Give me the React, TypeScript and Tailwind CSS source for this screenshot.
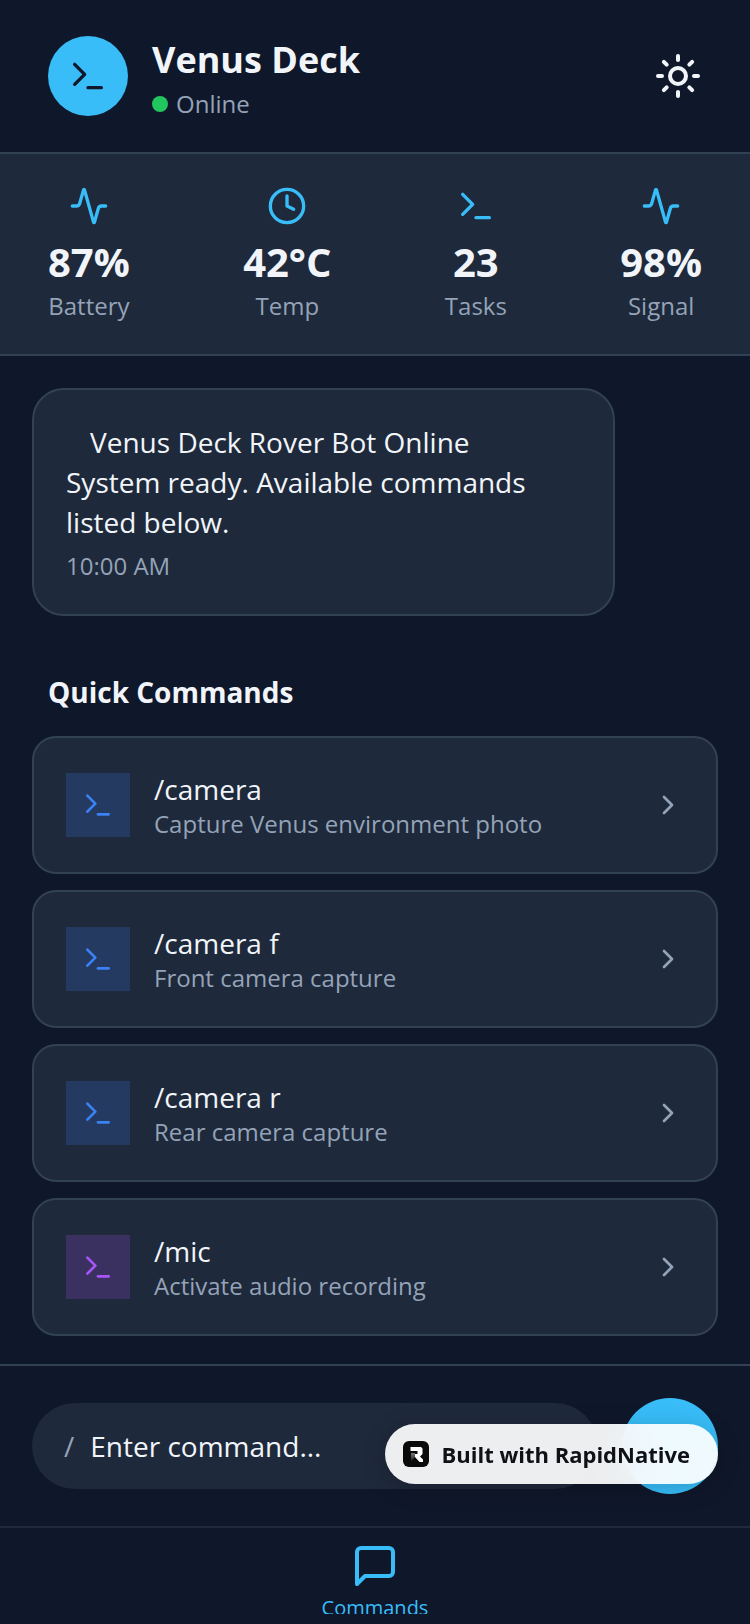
import React from 'react';
import { Activity, ChevronRight, Clock, Sun, Terminal } from 'lucide-react';
import { FiMessageSquare } from 'react-icons/fi';

const stats = [
  { label: 'Battery', value: '87%', Icon: Activity },
  { label: 'Temp', value: '42°C', Icon: Clock },
  { label: 'Tasks', value: '23', Icon: Terminal },
  { label: 'Signal', value: '98%', Icon: Activity },
];

const commands = [
  { name: '/camera', description: 'Capture Venus environment photo', tone: 'bg-[#3b82f6]/20 text-[#3b82f6]' },
  { name: '/camera f', description: 'Front camera capture', tone: 'bg-[#3b82f6]/20 text-[#3b82f6]' },
  { name: '/camera r', description: 'Rear camera capture', tone: 'bg-[#3b82f6]/20 text-[#3b82f6]' },
  { name: '/mic', description: 'Activate audio recording', tone: 'bg-[#a855f7]/20 text-[#a855f7]' },
];

const Header: React.FC = () => (
  <header className="flex items-center justify-between px-12 py-8 border-b-2 border-[#334155]">
    <div className="flex items-center gap-6">
      <div className="w-20 h-20 rounded-full bg-[#38bdf8] text-[#0f172a] flex items-center justify-center">
        <Terminal size={40} />
      </div>
      <div>
        <h1 className="text-4xl leading-14 font-bold">Venus Deck</h1>
        <div className="flex items-center gap-2">
          <span className="w-4 h-4 rounded-full bg-[#22c55e]"></span>
          <span className="text-2xl text-[#94a3b8]">Online</span>
        </div>
      </div>
    </div>
    <button type="button" aria-label="Toggle theme">
      <Sun size={48} />
    </button>
  </header>
);

const Stats: React.FC = () => (
  <section className="flex justify-between px-12 py-8 bg-[#1e293b] border-b-2 border-[#334155]">
    {stats.map(({ label, value, Icon }) => (
      <div key={label} className="flex flex-col items-center">
        <Icon size={40} className="text-[#38bdf8]" />
        <span className="mt-2 text-[40px] leading-14 font-bold">{value}</span>
        <span className="text-2xl text-[#94a3b8]">{label}</span>
      </div>
    ))}
  </section>
);

const Message: React.FC = () => (
  <div className="max-w-[85%] p-8 rounded-[32px] bg-[#1e293b] border-2 border-[#334155]">
    <p className="text-[28px] leading-10 indent-6">Venus Deck Rover Bot Online</p>
    <p className="text-[28px] leading-10">System ready. Available commands listed below.</p>
    <p className="mt-2 text-2xl text-[#94a3b8]">10:00 AM</p>
  </div>
);

const QuickCommands: React.FC = () => (
  <section className="mt-14">
    <h2 className="px-4 mb-6 text-[28px] leading-10 font-bold">Quick Commands</h2>
    <div className="flex flex-col gap-4">
      {commands.map((command) => (
        <button
          key={command.name}
          type="button"
          className="flex items-center gap-6 p-8 rounded-3xl bg-[#1e293b] border-2 border-[#334155] text-left"
        >
          <span className={`w-16 h-16 flex items-center justify-center ${command.tone}`}>
            <Terminal size={32} />
          </span>
          <span className="flex-1 flex flex-col">
            <span className="text-[28px] leading-[38px]">{command.name}</span>
            <span className="text-2xl text-[#94a3b8]">{command.description}</span>
          </span>
          <ChevronRight size={32} className="text-[#94a3b8]" />
        </button>
      ))}
    </div>
  </section>
);

const Composer: React.FC = () => (
  <form className="flex items-center gap-6 p-8 border-t-2 border-[#334155]">
    <label className="flex-1 min-w-0 flex items-center gap-4 px-8 py-6 rounded-full bg-[#1e293b] text-[28px] leading-[38px]">
      <span className="text-[#94a3b8]">/</span>
      <input
        type="text"
        aria-label="Command"
        placeholder="Enter command..."
        className="flex-1 min-w-0 bg-transparent outline-none placeholder:text-[#f1f5f9]"
      />
    </label>
    <button type="submit" aria-label="Send command" className="w-24 h-24 rounded-full bg-[#38bdf8]"></button>
  </form>
);

const BuiltWith: React.FC = () => (
  <a
    href="#"
    className="fixed right-8 bottom-[140px] flex items-center gap-3 pl-[18px] pr-7 py-[14px] rounded-full bg-white/92 backdrop-blur-xl text-[#0f1115] shadow-[0_4px_24px_rgba(0,0,0,0.2)]"
  >
    <svg width="26" height="26" viewBox="0 0 26 26" aria-hidden="true">
      <defs>
        <linearGradient id="stem" x1="0" y1="0" x2="0" y2="1">
          <stop offset="0" stopColor="#fff" stopOpacity="0.45" />
          <stop offset="1" stopColor="#fff" stopOpacity="0.1" />
        </linearGradient>
      </defs>
      <rect width="26" height="26" rx="6" fill="#0a0a0a" />
      <path d="M8 12h4v4l-4 4z" fill="url(#stem)" />
      <path d="M7.500 6H18l1.500 1.500V13L17 15.500l3 3V21h-3.500L12 16v-3h2.500v-3h-7z" fill="#fff" />
    </svg>
    <span className="text-[22px] leading-8 font-bold">Built with RapidNative</span>
  </a>
);

const App: React.FC = () => {
  return (
    <div className="h-screen flex flex-col overflow-hidden bg-[#0f172a] text-[#f1f5f9] font-['Open_Sans',sans-serif]">
      <Header />
      <Stats />
      <main className="flex-1 min-h-0 overflow-hidden px-8 pt-8 flex flex-col">
        <Message />
        <QuickCommands />
      </main>
      <Composer />
      <nav className="flex justify-center pt-[14px] pb-[10px] border-t-2 border-[#1e293b]">
        <button type="button" className="h-[72px] overflow-hidden flex flex-col items-center gap-1 text-[#38bdf8]">
          <FiMessageSquare size={48} className="shrink-0" />
          <span className="text-xl">Commands</span>
        </button>
      </nav>
      <BuiltWith />
    </div>
  );
};

export default App;
